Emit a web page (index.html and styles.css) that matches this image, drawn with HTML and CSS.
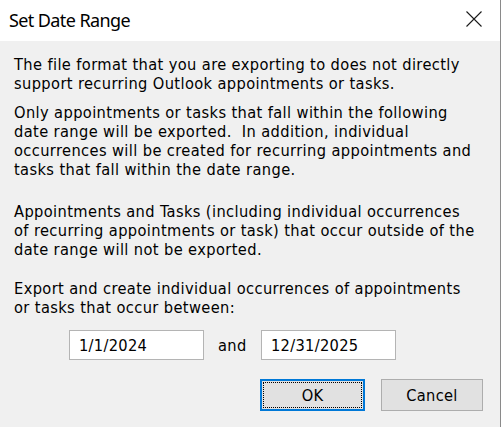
FILE: index.html
```html
<!DOCTYPE html>
<html>
<head>
<meta charset="utf-8">
<title>Set Date Range</title>
<link rel="stylesheet" href="styles.css">
</head>
<body>
<div class="dialog">
  <div class="titlebar">
    <span class="title">Set Date Range</span>
    <span class="close" aria-label="Close">
      <svg width="16" height="16" viewBox="0 0 16 16"><path d="M0.5 0.5L15.5 15.5M15.5 0.5L0.5 15.5" stroke="#1a1a1a" stroke-width="1.1" fill="none"/></svg>
    </span>
  </div>
  <div class="content">
    <p class="p1">The file format that you are exporting to does not directly<br>support recurring Outlook appointments or tasks.</p>
    <p class="p2">Only appointments or tasks that fall within the following<br>date range will be exported.&nbsp; In addition, individual<br>occurrences will be created for recurring appointments and<br>tasks that fall within the date range.</p>
    <p class="p3">Appointments and Tasks (including individual occurrences<br>of recurring appointments or task) that occur outside of the<br>date range will not be exported.</p>
    <p class="p4">Export and create individual occurrences of appointments<br>or tasks that occur between:</p>
    <div class="dates">
      <input class="date" type="text" value="1/1/2024">
      <span class="and">and</span>
      <input class="date" type="text" value="12/31/2025">
    </div>
    <div class="buttons">
      <button class="btn ok"><span class="focus">OK</span></button>
      <button class="btn cancel">Cancel</button>
    </div>
  </div>
</div>
</body>
</html>
```
FILE: styles.css
```css
html, body {
  margin: 0;
  padding: 0;
  background: #f0f0f0;
}
.dialog {
  width: 500px;
  height: 427px;
  border-right: 1px solid #8a8a8a;
  background: #f0f0f0;
  display: flex;
  flex-direction: column;
  font-family: "DejaVu Sans Condensed", "DejaVu Sans", sans-serif;
  color: #000;
}
.titlebar {
  height: 41px;
  background: #fff;
  display: flex;
  align-items: flex-start;
  justify-content: space-between;
}
.title {
  font-family: "Noto Sans", sans-serif;
  font-size: 18px;
  letter-spacing: -0.6px;
  line-height: 22px;
  margin: 9px 0 0 9px;
  color: #000;
}
.close {
  margin: 11px 18px 0 0;
  width: 16px;
  height: 16px;
  display: block;
}
.close svg { display: block; }
.content {
  padding: 14px 0 0 14px;
  font-size: 16.3px;
  letter-spacing: 0.38px;
  line-height: 19px;
}
.content p {
  margin: 0;
  white-space: nowrap;
}
.p2 { margin-top: 10px !important; }
.p3 { margin-top: 23px !important; }
.p4 { margin-top: 20px !important; }
.dates {
  display: flex;
  align-items: center;
  margin: 13px 0 0 55px;
}
.date {
  box-sizing: border-box;
  width: 135px;
  height: 30px;
  border: 1px solid #b4b4b4;
  background: #fff;
  font-family: "DejaVu Sans Condensed", "DejaVu Sans", sans-serif;
  font-size: 16.3px;
  letter-spacing: 0.3px;
  padding: 0 0 0 9px;
  margin: 0;
  color: #000;
  outline: none;
}
.and {
  width: 57px;
  padding-left: 14px;
  box-sizing: border-box;
}
.buttons {
  display: flex;
  justify-content: flex-end;
  gap: 16px;
  margin: 19px 17px 0 0;
}
.btn {
  box-sizing: border-box;
  height: 32px;
  background: #e1e1e1;
  font-family: "DejaVu Sans Condensed", "DejaVu Sans", sans-serif;
  font-size: 16.3px;
  letter-spacing: 0.3px;
  color: #000;
  margin: 0;
  padding: 0;
}
.ok {
  width: 105px;
  border: 2px solid #0078d7;
  padding: 1px;
}
.ok .focus {
  display: flex;
  align-items: center;
  justify-content: center;
  height: 100%;
  border: 1px dotted #000;
  box-sizing: border-box;
}
.cancel {
  width: 102px;
  border: 1px solid #adadad;
}
```
